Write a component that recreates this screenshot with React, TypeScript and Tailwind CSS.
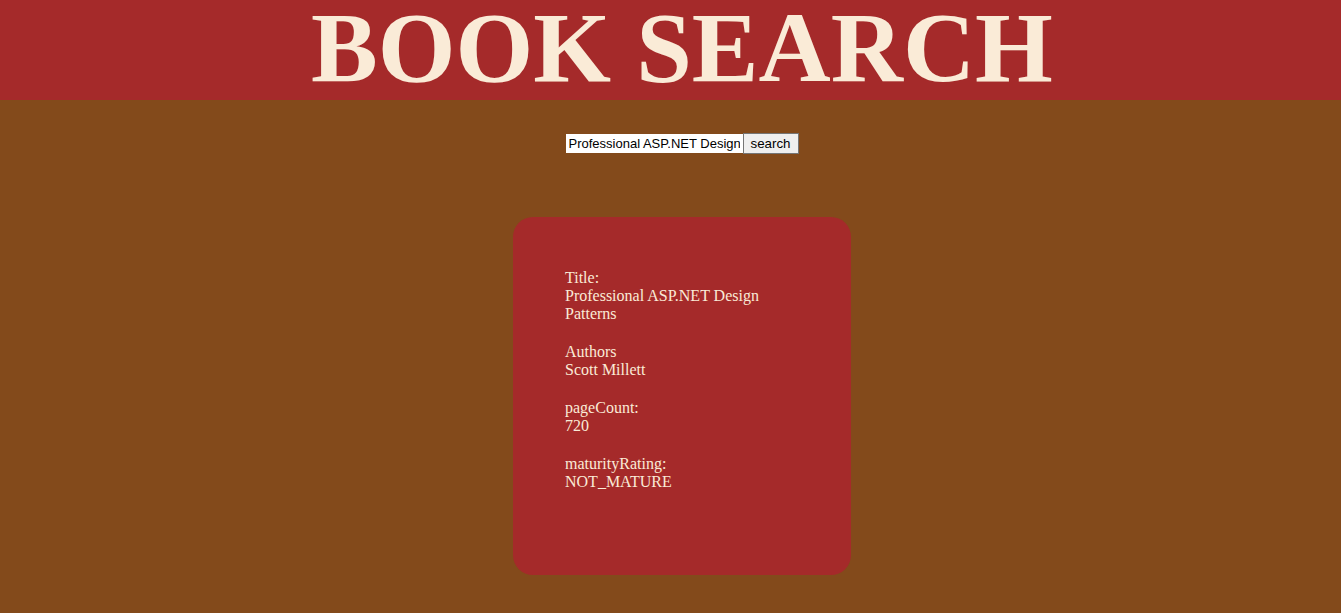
import React from "react";

export default function App() {
  const serif = { fontFamily: '"Liberation Serif", "Times New Roman", serif' };
  return (
    <div className="min-h-[613px] bg-[#834a1b]" style={serif}>
      <header className="h-[100px] bg-[#a52a2a] flex justify-center items-start pl-[23px]">
        <h1 className="text-[100px] leading-[94px] mt-[1px] font-bold text-[#faebd7] whitespace-nowrap">
          BOOK SEARCH
        </h1>
      </header>
      <div className="flex justify-center pl-[23px] pt-[34px]">
        <input
          className="w-[177px] h-[19px] bg-white text-black text-[13px] px-[3px] outline-none border-0"
          style={{ fontFamily: '"Liberation Sans", Arial, sans-serif' }}
          defaultValue="Professional ASP.NET Design Patterns"
        />
        <button
          className="h-[21px] -mt-[1px] w-[56px] bg-[#efefef] border border-[#767676] text-black text-[13.33px]"
          style={{ fontFamily: '"Liberation Sans", Arial, sans-serif' }}
        >
          search
        </button>
      </div>
      <div className="flex justify-center pl-[23px] pt-[63px]">
        <div className="w-[338px] h-[358px] rounded-[20px] bg-[#a52a2a] pt-[52px] px-[52px] text-[#faebd7] text-[16px] leading-[18px] flex flex-col gap-[20px]">
          <div>
            <div>Title:</div>
            <div>Professional ASP.NET Design Patterns</div>
          </div>
          <div>
            <div>Authors</div>
            <div>Scott Millett</div>
          </div>
          <div>
            <div>pageCount:</div>
            <div>720</div>
          </div>
          <div>
            <div>maturityRating:</div>
            <div>NOT_MATURE</div>
          </div>
        </div>
      </div>
    </div>
  );
}
